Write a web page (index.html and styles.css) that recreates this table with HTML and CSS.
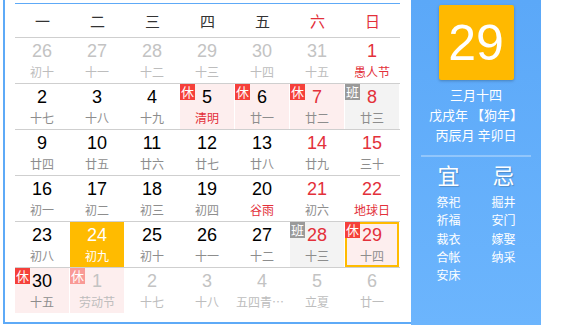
FILE: index.html
```html
<!DOCTYPE html>
<html lang="zh-CN">
<head>
<meta charset="utf-8">
<title>万年历</title>
<link rel="stylesheet" href="styles.css">
</head>
<body>
<div class="page">
  <div class="calendar">
    <div class="grid">
      <div class="week">
        <div class="wd">一</div><div class="wd">二</div><div class="wd">三</div><div class="wd">四</div><div class="wd">五</div><div class="wd weekend">六</div><div class="wd weekend">日</div>
      </div>
      <div class="row">
        <div class="cell other"><span class="num">26</span><span class="lunar">初十</span></div>
        <div class="cell other"><span class="num">27</span><span class="lunar">十一</span></div>
        <div class="cell other"><span class="num">28</span><span class="lunar">十二</span></div>
        <div class="cell other"><span class="num">29</span><span class="lunar">十三</span></div>
        <div class="cell other"><span class="num">30</span><span class="lunar">十四</span></div>
        <div class="cell other"><span class="num">31</span><span class="lunar">十五</span></div>
        <div class="cell red"><span class="num">1</span><span class="lunar fest">愚人节</span></div>
      </div>
      <div class="row">
        <div class="cell"><span class="num">2</span><span class="lunar">十七</span></div>
        <div class="cell"><span class="num">3</span><span class="lunar">十八</span></div>
        <div class="cell"><span class="num">4</span><span class="lunar">十九</span></div>
        <div class="cell rest"><i class="badge">休</i><span class="num">5</span><span class="lunar fest">清明</span></div>
        <div class="cell rest"><i class="badge">休</i><span class="num">6</span><span class="lunar">廿一</span></div>
        <div class="cell rest red"><i class="badge">休</i><span class="num">7</span><span class="lunar">廿二</span></div>
        <div class="cell work red"><i class="badge gray">班</i><span class="num">8</span><span class="lunar">廿三</span></div>
      </div>
      <div class="row">
        <div class="cell"><span class="num">9</span><span class="lunar">廿四</span></div>
        <div class="cell"><span class="num">10</span><span class="lunar">廿五</span></div>
        <div class="cell"><span class="num">11</span><span class="lunar">廿六</span></div>
        <div class="cell"><span class="num">12</span><span class="lunar">廿七</span></div>
        <div class="cell"><span class="num">13</span><span class="lunar">廿八</span></div>
        <div class="cell red"><span class="num">14</span><span class="lunar">廿九</span></div>
        <div class="cell red"><span class="num">15</span><span class="lunar">三十</span></div>
      </div>
      <div class="row">
        <div class="cell"><span class="num">16</span><span class="lunar">初一</span></div>
        <div class="cell"><span class="num">17</span><span class="lunar">初二</span></div>
        <div class="cell"><span class="num">18</span><span class="lunar">初三</span></div>
        <div class="cell"><span class="num">19</span><span class="lunar">初四</span></div>
        <div class="cell"><span class="num">20</span><span class="lunar fest">谷雨</span></div>
        <div class="cell red"><span class="num">21</span><span class="lunar">初六</span></div>
        <div class="cell red"><span class="num">22</span><span class="lunar fest">地球日</span></div>
      </div>
      <div class="row">
        <div class="cell"><span class="num">23</span><span class="lunar">初八</span></div>
        <div class="cell selected"><span class="num">24</span><span class="lunar">初九</span></div>
        <div class="cell"><span class="num">25</span><span class="lunar">初十</span></div>
        <div class="cell"><span class="num">26</span><span class="lunar">十一</span></div>
        <div class="cell"><span class="num">27</span><span class="lunar">十二</span></div>
        <div class="cell work red"><i class="badge gray">班</i><span class="num">28</span><span class="lunar">十三</span></div>
        <div class="cell rest red today"><i class="badge">休</i><span class="num">29</span><span class="lunar">十四</span></div>
      </div>
      <div class="row">
        <div class="cell rest"><i class="badge">休</i><span class="num">30</span><span class="lunar">十五</span></div>
        <div class="cell rest other"><i class="badge faded">休</i><span class="num">1</span><span class="lunar">劳动节</span></div>
        <div class="cell other"><span class="num">2</span><span class="lunar">十七</span></div>
        <div class="cell other"><span class="num">3</span><span class="lunar">十八</span></div>
        <div class="cell other"><span class="num">4</span><span class="lunar ellip">五四青年节</span></div>
        <div class="cell other"><span class="num">5</span><span class="lunar">立夏</span></div>
        <div class="cell other"><span class="num">6</span><span class="lunar">廿一</span></div>
      </div>
    </div>
  </div>
  <div class="panel">
    <div class="bigday">29</div>
    <div class="info">
      <div>三月十四</div>
      <div>戊戌年 【狗年】</div>
      <div>丙辰月 辛卯日</div>
    </div>
    <div class="divider"></div>
    <div class="yiji">
      <div class="col">
        <div class="head">宜</div>
        <div class="item">祭祀</div>
        <div class="item">祈福</div>
        <div class="item">裁衣</div>
        <div class="item">合帐</div>
        <div class="item">安床</div>
      </div>
      <div class="col">
        <div class="head">忌</div>
        <div class="item">掘井</div>
        <div class="item">安门</div>
        <div class="item">嫁娶</div>
        <div class="item">纳采</div>
      </div>
    </div>
  </div>
</div>
</body>
</html>
```

FILE: styles.css
```css
* { box-sizing: border-box; }
html, body { margin: 0; padding: 0; background: #fff; }
body {
  font-family: "Noto Sans CJK SC", "Liberation Sans", sans-serif;
  width: 575px;
  height: 333px;
  overflow: hidden;
}
.page {
  display: flex;
  align-items: flex-start;
}
.calendar {
  margin-left: 3px;
  width: 408px;
  height: 324px;
  border-left: 2px solid #5eaaf7;
  border-bottom: 2px solid #5eaaf7;
  padding: 3px 11px 0 10px;
}
.grid {
  width: 385px;
  border-top: 1px solid #5eaaf7;
}
.week {
  display: flex;
  height: 33px;
}
.wd {
  width: 55px;
  display: flex;
  align-items: center;
  justify-content: center;
  font-size: 15px;
  color: #333;
}
.wd.weekend { color: #e3303a; }
.row {
  display: flex;
  border-top: 1px solid #cfcfcf;
  height: 46px;
}
.cell {
  position: relative;
  width: 54px;
  height: 45px;
  margin-right: 1px;
  display: flex;
  flex-direction: column;
  align-items: center;
  padding-top: 3px;
  color: #000;
}
.num {
  font-family: "Liberation Sans", Arial, sans-serif;
  font-size: 18px;
  line-height: 20px;
}
.lunar {
  margin-top: 3px;
  font-size: 12px;
  line-height: 16px;
  color: #8d8d8d;
  white-space: nowrap;
}
.lunar.ellip {
  max-width: 52px;
  overflow: hidden;
  text-overflow: ellipsis;
}
.cell.red .num { color: #e3303a; }
.lunar.fest { color: #e3303a; }
.cell.other .num { color: #c3c3c3; }
.cell.other .lunar { color: #bdbdbd; }
.cell.rest { background: #fdeeee; }
.cell.work { background: #f3f3f3; }
.cell.selected { background: #ffbb00; }
.cell.selected .num,
.cell.selected .lunar { color: #fff; }
.cell.today { box-shadow: inset 0 0 0 2px #ffbb00; }
.badge {
  position: absolute;
  top: 0;
  left: 0;
  width: 15px;
  height: 16px;
  background: #f5403a;
  color: #fff;
  font-style: normal;
  font-size: 13px;
  line-height: 16px;
  text-align: center;
}
.badge.gray { background: #9a9a9a; }
.badge.faded { background: #f99a96; }
.panel {
  width: 130px;
  height: 325px;
  background: linear-gradient(#5ba8f8, #6cb5fd);
  color: #fff;
  display: flex;
  flex-direction: column;
  align-items: center;
}
.bigday {
  margin-top: 5px;
  width: 75px;
  height: 75px;
  background: #ffb900;
  border-radius: 2px;
  box-shadow: 0 1px 3px rgba(0, 0, 0, 0.25);
  display: flex;
  align-items: center;
  justify-content: center;
  font-family: "Liberation Sans", Arial, sans-serif;
  font-size: 50px;
  color: #fff;
}
.info {
  margin-top: 5px;
  text-align: center;
  font-size: 13px;
  line-height: 20px;
  white-space: nowrap;
}
.divider {
  margin-top: 10px;
  width: 110px;
  height: 2px;
  background: rgba(255, 255, 255, 0.3);
}
.yiji {
  display: flex;
  margin-top: 4px;
}
.col {
  width: 55px;
  display: flex;
  flex-direction: column;
  align-items: center;
}
.head {
  font-size: 22px;
  line-height: 26px;
  text-shadow: 1px 1px 1px rgba(0, 0, 0, 0.2);
  margin-bottom: 6px;
}
.item {
  font-size: 12px;
  line-height: 18.3px;
}
```
